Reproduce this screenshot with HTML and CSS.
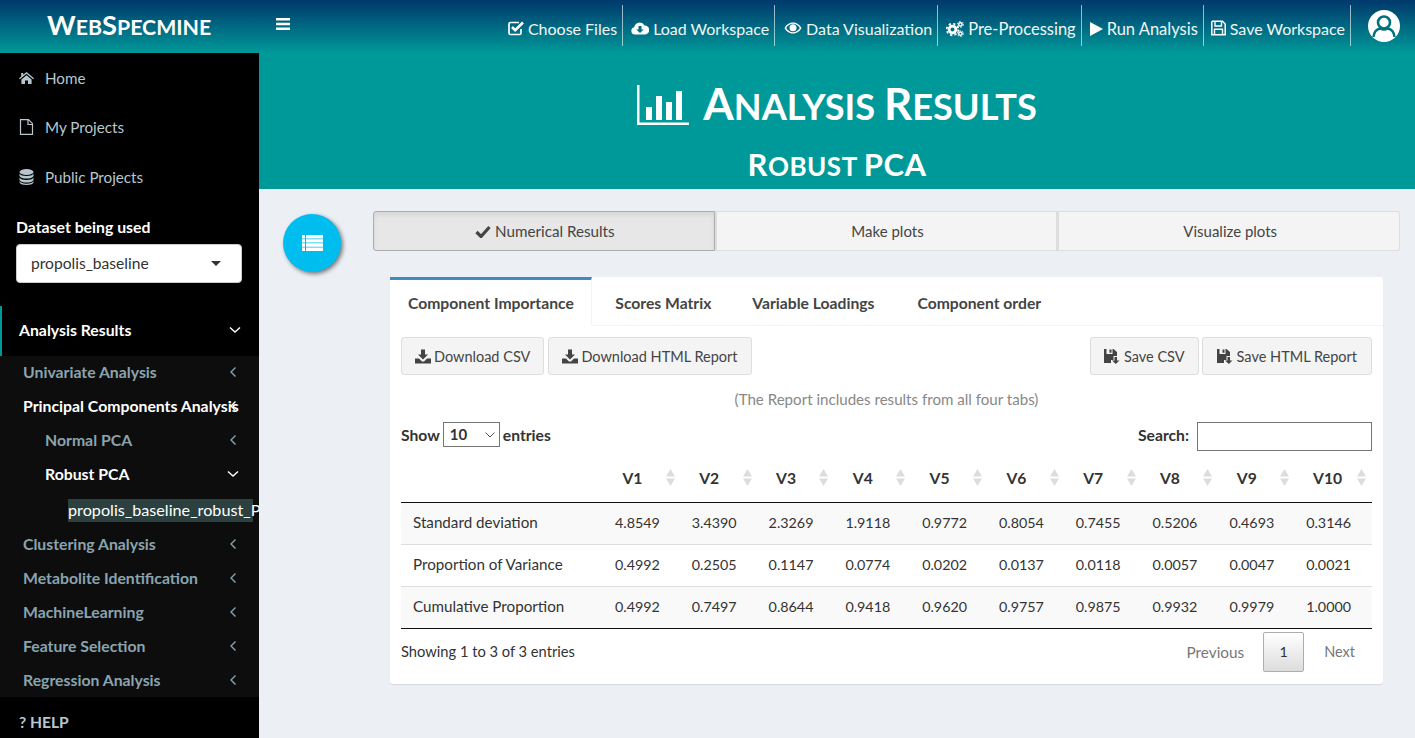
FILE: index.html
```html
<!DOCTYPE html>
<html lang="en">
<head>
  <meta charset="UTF-8" />
  <title>WebSpecmine - Analysis Results</title>
  <link rel="stylesheet" href="styles.css">
</head>
<body>
  <svg class="defs" width="0" height="0">
    <symbol id="angle-left" viewBox="0 0 10 14"><path d="M7.500 2.500 3 7l4.500 4.500" fill="none" stroke="currentColor" stroke-width="1.400"/></symbol>
    <symbol id="angle-down" viewBox="0 0 14 10"><path d="M2 2.500l5 4.500 5-4.500" fill="none" stroke="currentColor" stroke-width="1.400"/></symbol>
    <symbol id="sort" viewBox="0 0 9 17"><path d="M4.500 0 9 7.500H0zM4.500 17 9 9.500H0z" fill="#dcdcdc"/></symbol>
    <symbol id="download" viewBox="0 0 16 14"><path d="M6 0h4v5h3L8 10 3 5h3zM0 9h4l3 3h2l3-3h4v5H0z" fill="currentColor"/></symbol>
    <symbol id="save-down" viewBox="0 0 16 15"><path d="M0 0h2.500v5h6V0h1L13 3v4H9.500v4H7v3H0zM5.500 .5H7.500v3.200H5.500zM10.500 8h2.500v3.500h2.500L11.800 15 8 11.500h2.500z" fill="currentColor"/></symbol>
  </svg>

  <header class="topbar">
    <div class="brand"><span class="initial">W</span>eb<span class="initial">S</span>pecmine</div>
    <div class="topbar-main">
      <svg class="toggle" viewBox="0 0 14 12"><path d="M0 0h14v2.500H0zM0 4.700h14v2.500H0zM0 9.400h14v2.500H0z" fill="#fff"/></svg>
      <nav class="topnav">
        <a class="topnav-item first">
          <svg class="topnav-icon" viewBox="0 0 16 16"><path d="M13 9v4a1.500 1.500 0 0 1-1.500 1.500h-9A1.500 1.500 0 0 1 1 13V4a1.500 1.500 0 0 1 1.500-1.500H11" fill="none" stroke="#fff" stroke-width="1.700"/><path d="M4 7l3.200 3.200L15 2.500" fill="none" stroke="#fff" stroke-width="2.600"/></svg>
          Choose Files
        </a>
        <a class="topnav-item">
          <svg class="topnav-icon wide" viewBox="0 0 18 14"><path d="M4 13.500a3.700 3.700 0 0 1-.8-7.300A5.500 5.500 0 0 1 13.500 4.500a4.500 4.500 0 0 1 .5 9zM7.500 5v3.500H5.300L9 12l3.700-3.500h-2.200V5z" fill="#fff" fill-rule="evenodd"/></svg>
          Load Workspace
        </a>
        <a class="topnav-item first">
          <svg class="topnav-icon wide" viewBox="0 0 18 12"><path d="M9 .5C5 .5 2 3 .5 6 2 9 5 11.500 9 11.500S16 9 17.500 6C16 3 13 .5 9 .5zM9 1.800c3 0 5.300 1.800 6.800 4.200-1.500 2.400-3.800 4.200-6.800 4.200S3.700 8.400 2.200 6C3.700 3.600 6 1.800 9 1.800z" fill="#fff" fill-rule="evenodd"/><circle cx="9" cy="5.700" r="3.500" fill="#fff"/></svg>
          Data Visualization
        </a>
        <a class="topnav-item roomy">
          <svg class="topnav-icon wide" viewBox="0 0 18 16">
            <circle cx="6.500" cy="8.500" r="3.400" fill="none" stroke="#fff" stroke-width="2.800"/>
            <circle cx="6.500" cy="8.500" r="5.800" fill="none" stroke="#fff" stroke-width="1.700" stroke-dasharray="2.300 2.250"/>
            <circle cx="14.400" cy="3.400" r="1.700" fill="none" stroke="#fff" stroke-width="1.500"/>
            <circle cx="14.400" cy="3.400" r="3" fill="none" stroke="#fff" stroke-width="1" stroke-dasharray="1.500 1.640"/>
            <circle cx="14.400" cy="12.600" r="1.700" fill="none" stroke="#fff" stroke-width="1.500"/>
            <circle cx="14.400" cy="12.600" r="3" fill="none" stroke="#fff" stroke-width="1" stroke-dasharray="1.500 1.640"/>
          </svg>
          Pre-Processing
        </a>
        <a class="topnav-item roomy">
          <svg class="topnav-icon narrow" viewBox="0 0 14 15"><path d="M0 0l14 7.500L0 15z" fill="#fff"/></svg>
          Run Analysis
        </a>
        <a class="topnav-item last">
          <svg class="topnav-icon save" viewBox="0 0 15 15"><path d="M1.500.8h10l2.700 2.700v10.700H.8V1.500z" fill="none" stroke="#fff" stroke-width="1.500"/><path d="M4 1v4.500h6.500V1M3.500 14V8.800h8V14" fill="none" stroke="#fff" stroke-width="1.400"/></svg>
          Save Workspace
        </a>
      </nav>
      <svg class="avatar" viewBox="0 0 32 32">
        <circle cx="16" cy="16" r="16" fill="#fff"/>
        <circle cx="16" cy="12.500" r="6" fill="none" stroke="#00707f" stroke-width="2.600"/>
        <path d="M5.500 27c.5-6 4-8 7-8.500 2 1.300 5 1.300 7 0 3 .5 6.500 2.500 7 8.500" fill="none" stroke="#00707f" stroke-width="2.400"/>
      </svg>
    </div>
  </header>

  <div class="layout">
    <aside class="sidebar">
      <ul class="side-links">
        <li class="side-link">
          <svg class="side-icon" viewBox="0 0 15 12"><path d="M7.500 0 15 6.300l-.8.900L7.500 1.700.8 7.200 0 6.300 2.200 4.500V1h2v1.800zM2.400 7.400 7.500 3.200l5.100 4.200V12H9V8.500H6V12H2.400z" fill="currentColor"/></svg>
          Home
        </li>
        <li class="side-link">
          <svg class="side-icon" viewBox="0 0 15 16"><path d="M1.500.7h8l4 4v10.600h-12zM9 1v4.500h4.500" fill="none" stroke="currentColor" stroke-width="1.200"/></svg>
          My Projects
        </li>
        <li class="side-link">
          <svg class="side-icon" viewBox="0 0 14 16"><ellipse cx="7" cy="3" rx="7" ry="3" fill="currentColor"/><path d="M0 4.500c1 1.800 3.500 2.500 7 2.500s6-.7 7-2.500V7c-1 1.800-3.500 2.600-7 2.600S1 8.800 0 7zM0 8.500c1 1.800 3.500 2.500 7 2.500s6-.7 7-2.500V11c-1 1.800-3.500 2.600-7 2.600S1 12.800 0 11zM0 12.300c1 1.700 3.500 2.400 7 2.400s6-.7 7-2.400V13.500c-1 1.800-3.500 2.500-7 2.500s-6-.7-7-2.500z" fill="currentColor"/></svg>
          Public Projects
        </li>
      </ul>

      <div class="dataset">
        <div class="dataset-label">Dataset being used</div>
        <div class="dataset-select">
          <span>propolis_baseline</span>
          <span class="caret"></span>
        </div>
      </div>

      <div class="tree-head">
        <span class="tree-label">Analysis Results</span>
        <svg class="chev-down"><use href="#angle-down"/></svg>
      </div>
      <ul class="tree">
        <li class="tree-item"><span class="tree-label">Univariate Analysis</span><svg class="chev-left"><use href="#angle-left"/></svg></li>
        <li class="tree-item open"><span class="tree-label">Principal Components Analysis</span><svg class="chev-left"><use href="#angle-left"/></svg></li>
        <li class="tree-item sub"><span class="tree-label">Normal PCA</span><svg class="chev-left"><use href="#angle-left"/></svg></li>
        <li class="tree-item sub open"><span class="tree-label">Robust PCA</span><svg class="chev-down"><use href="#angle-down"/></svg></li>
        <li class="tree-leaf"><span class="leaf-label">propolis_baseline_robust_PCA</span></li>
        <li class="tree-item"><span class="tree-label">Clustering Analysis</span><svg class="chev-left"><use href="#angle-left"/></svg></li>
        <li class="tree-item"><span class="tree-label">Metabolite Identification</span><svg class="chev-left"><use href="#angle-left"/></svg></li>
        <li class="tree-item"><span class="tree-label">MachineLearning</span><svg class="chev-left"><use href="#angle-left"/></svg></li>
        <li class="tree-item"><span class="tree-label">Feature Selection</span><svg class="chev-left"><use href="#angle-left"/></svg></li>
        <li class="tree-item"><span class="tree-label">Regression Analysis</span><svg class="chev-left"><use href="#angle-left"/></svg></li>
      </ul>
      <div class="help">? HELP</div>
    </aside>

    <main class="content">
      <section class="hero">
        <h1 class="hero-title">
          <svg class="hero-icon" viewBox="0 0 52 40"><path d="M0 0h2.500v37.500H52V40H0z" fill="#fff"/><path d="M9 22h6v13H9zM19 11h6v24h-6zM29 17h6v18h-6zM39 6h6v29h-6z" fill="#fff"/></svg>
          <span><span class="initial">A</span>nalysis <span class="initial">R</span>esults</span>
        </h1>
        <h2 class="hero-sub"><span class="initial">R</span>obust <span class="initial">PCA</span></h2>
      </section>

      <div class="workspace">
        <div class="step-row">
          <div class="fab">
            <svg class="fab-icon" viewBox="0 0 21 16"><path d="M0 0h3v3.500H0zM4 0h17v3.500H4zM0 4.200h3v3.400H0zM4 4.200h17v3.400H4zM0 8.300h3v3.400H0zM4 8.300h17v3.400H4zM0 12.500h3V16H0zM4 12.500h17V16H4z" fill="#fff"/></svg>
          </div>
          <div class="steps">
            <div class="step active">
              <svg class="step-check" viewBox="0 0 16 13"><path d="M1.500 7l4.500 4.500L14.500 2" fill="none" stroke="currentColor" stroke-width="3.200"/></svg>
              Numerical Results
            </div>
            <div class="step">Make plots</div>
            <div class="step">Visualize plots</div>
          </div>
        </div>

        <div class="panel">
          <ul class="tabs">
            <li class="tab active">Component Importance</li>
            <li class="tab">Scores Matrix</li>
            <li class="tab">Variable Loadings</li>
            <li class="tab">Component order</li>
          </ul>

          <div class="panel-body">
            <div class="btn-row">
              <div class="btn-group">
                <div class="btn"><svg class="btn-icon"><use href="#download"/></svg>Download CSV</div>
                <div class="btn"><svg class="btn-icon"><use href="#download"/></svg>Download HTML Report</div>
              </div>
              <div class="btn-group right">
                <div class="btn"><svg class="btn-icon"><use href="#save-down"/></svg>Save CSV</div>
                <div class="btn"><svg class="btn-icon"><use href="#save-down"/></svg>Save HTML Report</div>
              </div>
            </div>
            <p class="report-note">(The Report includes results from all four tabs)</p>

            <div class="table-tools">
              <label class="tool-label">Show
                <span class="length-select">10<svg class="length-chev" viewBox="0 0 10 6"><path d="M.5.500 5 5 9.500.500" fill="none" stroke="#555" stroke-width="1"/></svg></span>
                entries</label>
              <label class="tool-label">Search: <span class="search-box"></span></label>
            </div>

            <table class="results">
              <thead>
                <tr>
                  <th></th>
                  <th><div class="th-in"><span>V1</span><svg class="sort"><use href="#sort"/></svg></div></th>
                  <th><div class="th-in"><span>V2</span><svg class="sort"><use href="#sort"/></svg></div></th>
                  <th><div class="th-in"><span>V3</span><svg class="sort"><use href="#sort"/></svg></div></th>
                  <th><div class="th-in"><span>V4</span><svg class="sort"><use href="#sort"/></svg></div></th>
                  <th><div class="th-in"><span>V5</span><svg class="sort"><use href="#sort"/></svg></div></th>
                  <th><div class="th-in"><span>V6</span><svg class="sort"><use href="#sort"/></svg></div></th>
                  <th><div class="th-in"><span>V7</span><svg class="sort"><use href="#sort"/></svg></div></th>
                  <th><div class="th-in"><span>V8</span><svg class="sort"><use href="#sort"/></svg></div></th>
                  <th><div class="th-in"><span>V9</span><svg class="sort"><use href="#sort"/></svg></div></th>
                  <th><div class="th-in"><span>V10</span><svg class="sort"><use href="#sort"/></svg></div></th>
                </tr>
              </thead>
              <tbody>
                <tr class="odd"><td>Standard deviation</td><td>4.8549</td><td>3.4390</td><td>2.3269</td><td>1.9118</td><td>0.9772</td><td>0.8054</td><td>0.7455</td><td>0.5206</td><td>0.4693</td><td>0.3146</td></tr>
                <tr><td>Proportion of Variance</td><td>0.4992</td><td>0.2505</td><td>0.1147</td><td>0.0774</td><td>0.0202</td><td>0.0137</td><td>0.0118</td><td>0.0057</td><td>0.0047</td><td>0.0021</td></tr>
                <tr class="odd"><td>Cumulative Proportion</td><td>0.4992</td><td>0.7497</td><td>0.8644</td><td>0.9418</td><td>0.9620</td><td>0.9757</td><td>0.9875</td><td>0.9932</td><td>0.9979</td><td>1.0000</td></tr>
              </tbody>
            </table>

            <div class="table-foot">
              <div class="table-info">Showing 1 to 3 of 3 entries</div>
              <div class="pager">
                <span class="page-link prev">Previous</span>
                <span class="page-num">1</span>
                <span class="page-link next">Next</span>
              </div>
            </div>
          </div>
        </div>
      </div>
    </main>
  </div>
</body>
</html>
```

FILE: styles.css
```css
* {
  box-sizing: border-box;
}
html, body {
  height: 100%;
  margin: 0;
  overflow: hidden;
}
body {
  font-family: 'Lato', 'Noto Sans', sans-serif;
  font-size: 15.3px;
  color: #333;
  background-color: #ecf0f5;
}
ul {
  list-style: none;
  margin: 0;
  padding: 0;
}
.defs {
  display: block;
  height: 0;
}

/* top bar */
.topbar {
  display: flex;
  height: 53px;
  background: linear-gradient(#00386b, #009999);
  color: #fff;
}
.brand {
  width: 259px;
  padding-left: 47px;
  font-size: 21.3px;
  font-weight: 700;
  text-transform: uppercase;
  line-height: 50px;
}
.brand .initial {
  font-size: 27.3px;
}
.topbar-main {
  flex: 1;
  display: flex;
  align-items: flex-start;
}
.toggle {
  width: 14px;
  height: 12px;
  margin: 18px 0 0 17px;
}
.topnav {
  display: flex;
  margin: 5px 0 0 auto;
}
.topnav-item {
  display: flex;
  align-items: center;
  gap: 4px;
  height: 41px;
  padding: 5px 5px 0 8px;
  border-right: 1px solid rgba(255, 255, 255, 0.6);
  font-size: 16px;
  white-space: nowrap;
  color: #f2f6f6;
}
.topnav-item.first {
  padding-left: 9px;
}
.topnav-item.last {
  padding-left: 7px;
}
.topnav-item.roomy {
  padding-top: 6px;
  font-size: 16.5px;
}
.topnav-icon {
  width: 16px;
  height: 16px;
}
.topnav-icon.wide {
  width: 18px;
}
.topnav-icon.narrow {
  width: 13px;
}
.topnav-icon.save {
  width: 15px;
}
.avatar {
  width: 32px;
  height: 32px;
  margin: 10px 15px 0 17px;
}

.layout {
  display: flex;
  height: calc(100vh - 53px);
}

/* sidebar */
.sidebar {
  width: 259px;
  flex-shrink: 0;
  overflow: hidden;
  background-color: #000;
  color: #b8c7ce;
}
.side-link {
  display: flex;
  align-items: center;
  height: 50px;
  padding-left: 19px;
  font-size: 15.2px;
}
.side-link:nth-child(2) {
  height: 49px;
  padding-bottom: 2px;
}
.side-icon {
  width: 15px;
  height: 16px;
  margin-right: 11px;
}
.dataset {
  height: 104px;
  padding: 15px 17px 0 16px;
}
.dataset-label {
  font-size: 15.8px;
  font-weight: 700;
  color: #fff;
  line-height: 20px;
  margin-bottom: 7px;
}
.dataset-select {
  display: flex;
  align-items: center;
  justify-content: space-between;
  height: 39px;
  padding: 0 20px 2px 14px;
  background-color: #fff;
  border: 1px solid #ccc;
  border-radius: 4px;
  color: #333;
  font-size: 15.6px;
}
.caret {
  width: 0;
  height: 0;
  margin-top: 2px;
  border-left: 5px solid transparent;
  border-right: 5px solid transparent;
  border-top: 5px solid #333;
}
.tree-head {
  display: flex;
  align-items: center;
  height: 50px;
  padding: 0 19px 4px 17px;
  border-left: 2px solid #009999;
  font-size: 15.8px;
  font-weight: 700;
  color: #fff;
}
.tree {
  height: 341px;
  background-color: #0d0d0d;
}
.tree-item {
  display: flex;
  align-items: center;
  height: 34px;
  padding: 0 21px 4px 23px;
  font-size: 15.8px;
  font-weight: 700;
  color: #8aa4af;
}
.tree-item.sub {
  padding-left: 45px;
}
.tree-item.open {
  color: #fff;
}
.tree-label {
  flex: 1;
  min-width: 0;
  white-space: nowrap;
}
.chev-left {
  width: 10px;
  height: 14px;
  flex-shrink: 0;
  margin-top: 2px;
}
.chev-down {
  width: 14px;
  height: 10px;
  flex-shrink: 0;
  margin: 2px -2px 0 0;
}
.tree-leaf {
  display: flex;
  align-items: center;
  height: 36px;
  padding-left: 68px;
}
.leaf-label {
  display: block;
  width: 185px;
  height: 23px;
  line-height: 22px;
  font-size: 16.2px;
  white-space: nowrap;
  background-color: #2b403f;
  color: #fff;
}
.help {
  padding: 16px 0 0 19px;
  font-size: 15.6px;
  font-weight: 700;
  color: #b8c7ce;
}

/* content */
.content {
  flex: 1;
  min-width: 0;
}
.hero {
  height: 136px;
  padding-top: 20px;
  background-color: #009999;
  color: #fff;
  text-align: center;
}
.hero-title {
  display: flex;
  align-items: center;
  justify-content: center;
  gap: 14px;
  margin: 0;
  font-size: 36.2px;
  line-height: 60px;
  font-weight: 700;
  text-transform: uppercase;
}
.hero-title .initial {
  font-size: 44px;
}
.hero-icon {
  width: 52px;
  height: 40px;
}
.hero-sub {
  margin: 0;
  padding-top: 6px;
  font-size: 26px;
  line-height: 44px;
  font-weight: 700;
  text-transform: uppercase;
  letter-spacing: 0.5px;
}
.hero-sub .initial {
  font-size: 31px;
}
.workspace {
  padding: 22px 15px 0 14px;
}
.step-row {
  display: flex;
}
.fab {
  display: flex;
  align-items: center;
  justify-content: center;
  width: 58px;
  height: 58px;
  margin: 3px 0 0 10px;
  border-radius: 50%;
  background-color: #00bdef;
  box-shadow: 2px 2px 4px rgba(0, 0, 0, 0.5);
}
.fab-icon {
  width: 21px;
  height: 16px;
}
.steps {
  display: flex;
  flex: 1;
  height: 40px;
  margin-left: 32px;
}
.step {
  flex: 1;
  display: flex;
  align-items: center;
  justify-content: center;
  gap: 4px;
  padding-left: 2px;
  background-color: #f4f4f4;
  border: 1px solid #ddd;
  border-left-width: 2px;
  color: #444;
  font-size: 15px;
}
.step:first-child {
  border-radius: 3px 0 0 3px;
}
.step:last-child {
  border-radius: 0 3px 3px 0;
}
.step.active {
  background-color: #e7e7e7;
  border: 1px solid #adadad;
  box-shadow: inset 0 3px 5px rgba(0, 0, 0, 0.08);
  font-size: 15.2px;
}
.step-check {
  width: 16px;
  height: 13px;
}

/* results panel */
.panel {
  margin: 5px 17px 0 117px;
  height: 407px;
  background-color: #fff;
  border-radius: 3px;
  box-shadow: 0 1px 1px rgba(0, 0, 0, 0.1);
}
.tabs {
  display: flex;
  height: 49px;
  border-bottom: 1px solid #f4f4f4;
  font-size: 15.7px;
  font-weight: 700;
}
.tab {
  padding: 17px 20.5px 0;
  color: #444;
}
.tab:last-child {
  margin-left: 2px;
}
.tab.active {
  padding: 14px 17px 0 18px;
  height: 49px;
  margin-right: 3px;
  background-color: #fff;
  border-top: 3px solid #3c8dbc;
  border-right: 1px solid #f4f4f4;
}
.panel-body {
  padding: 11px 11px 0;
}
.btn-row {
  display: flex;
  justify-content: space-between;
}
.btn-group {
  display: flex;
  gap: 4px;
}
.btn-group.right {
  gap: 3px;
}
.btn {
  display: flex;
  align-items: center;
  gap: 3px;
  height: 38px;
  padding: 0 13px;
  background-color: #f4f4f4;
  border: 1px solid #ddd;
  border-radius: 3px;
  color: #444;
  font-size: 14.5px;
  white-space: nowrap;
}
.btn-group.right .btn {
  gap: 4px;
}
.btn-group.right .btn:last-child {
  padding: 0 14px;
}
.btn-icon {
  width: 16px;
  height: 15px;
}
.report-note {
  margin: 0;
  padding-top: 14px;
  line-height: 20px;
  font-size: 15.1px;
  text-align: center;
  color: #888;
}
.table-tools {
  display: flex;
  justify-content: space-between;
  height: 29px;
  margin-top: 13px;
}
.tool-label {
  display: flex;
  align-items: flex-start;
  gap: 3px;
  line-height: 27px;
  font-size: 15.7px;
  font-weight: 700;
}
.length-select {
  display: flex;
  align-items: center;
  justify-content: space-between;
  width: 57px;
  height: 25px;
  padding: 0 4px 0 6px;
  border: 1px solid #767676;
  font-size: 15px;
}
.length-chev {
  width: 10px;
  height: 6px;
}
.search-box {
  width: 175px;
  height: 29px;
  margin-left: 5px;
  border: 1px solid #767676;
}
.results {
  width: 100%;
  table-layout: fixed;
  border-collapse: collapse;
  margin-top: 9px;
}
.results th {
  height: 42px;
  padding: 0 6px 0 10px;
  border-bottom: 1px solid #111;
  font-size: 15.7px;
  font-weight: 700;
}
.results th:first-child {
  width: 203px;
}
.th-in {
  display: flex;
  align-items: center;
  padding-bottom: 6px;
}
.th-in span {
  flex: 1;
  padding-right: 15px;
  text-align: center;
}
.results th:last-child .th-in span {
  padding-right: 7px;
}
.sort {
  width: 9px;
  height: 17px;
  flex-shrink: 0;
}
.results td {
  height: 42px;
  padding: 0 0 2px 11px;
  border-top: 1px solid #ddd;
  font-size: 14.3px;
  white-space: nowrap;
}
.results tbody tr:first-child td {
  border-top: none;
}
.results td:first-child {
  padding-left: 12px;
  font-size: 15.2px;
}
.results tr.odd {
  background-color: #f9f9f9;
}
.results tbody tr:last-child td {
  border-bottom: 1px solid #111;
}
.table-foot {
  display: flex;
  justify-content: space-between;
  padding-top: 3px;
}
.table-info {
  padding-top: 10px;
  font-size: 14.7px;
}
.pager {
  display: flex;
  align-items: center;
}
.page-link {
  color: #777;
}
.page-link.prev {
  padding-right: 19px;
}
.page-link.next {
  padding: 0 17px 0 20px;
  font-size: 14.5px;
}
.page-num {
  display: flex;
  align-items: center;
  justify-content: center;
  width: 41px;
  height: 40px;
  border: 1px solid #adadad;
  border-radius: 2px;
  background: linear-gradient(#fff, #dcdcdc);
  font-size: 14.3px;
}
```
